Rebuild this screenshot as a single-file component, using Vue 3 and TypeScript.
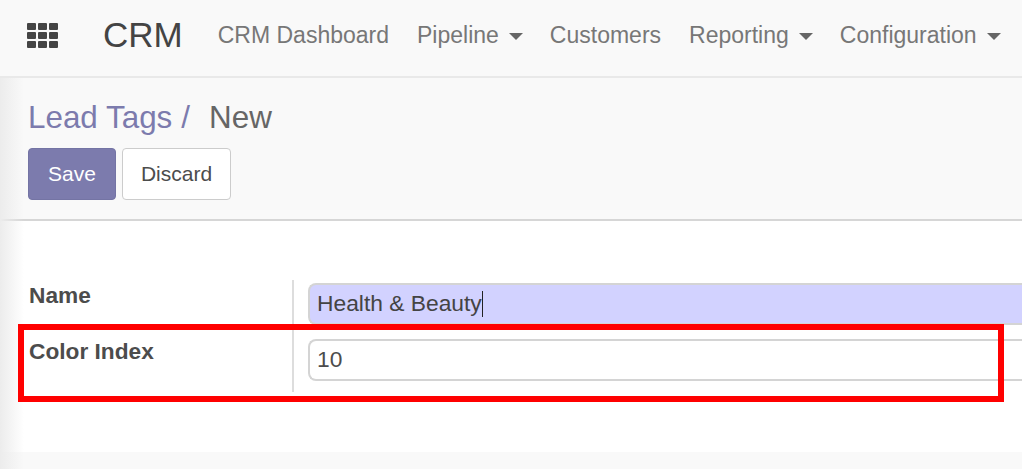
<script setup lang="ts">
const menus: { label: string; caret: boolean }[] = [
  { label: 'CRM Dashboard', caret: false },
  { label: 'Pipeline', caret: true },
  { label: 'Customers', caret: false },
  { label: 'Reporting', caret: true },
  { label: 'Configuration', caret: true },
]
const dots: number[] = [0, 1, 2, 3, 4, 5, 6, 7, 8]
</script>

<template>
  <div class="page">
    <header class="nav">
      <span class="apps"><i v-for="d in dots" :key="d"></i></span>
      <span class="brand">CRM</span>
      <nav class="menu">
        <span v-for="m in menus" :key="m.label" class="item">{{ m.label }}<b v-if="m.caret" class="caret"></b></span>
      </nav>
    </header>
    <section class="panel">
      <div class="crumbs"><span class="link">Lead Tags</span><span class="sep">/</span><span class="cur">New</span></div>
      <div class="buttons">
        <button class="btn save">Save</button>
        <button class="btn discard">Discard</button>
      </div>
    </section>
    <main class="sheet">
      <div class="form">
        <div class="labels">
          <div class="lab first">Name</div>
          <div class="lab">Color Index</div>
        </div>
        <div class="fields">
          <div class="field focus"><span class="val">Health &amp; Beauty</span><span class="cursor"></span></div>
          <div class="field"><span class="val">10</span></div>
        </div>
      </div>
    </main>
    <footer class="foot"></footer>
    <div class="shade"></div>
    <div class="mark"></div>
  </div>
</template>

<style>
html, body { margin: 0; background: #f9f9f9; overflow: hidden; }
</style>

<style scoped>
.page { position: relative; width: 1022px; height: 469px; overflow: hidden; background: #f9f9f9; font-family: "Liberation Sans", Arial, sans-serif; color: #4c4c4c; display: flex; flex-direction: column; }
.nav { height: 76px; flex: none; display: flex; align-items: center; border-bottom: 2px solid #e9e9e9; padding-left: 27px; box-sizing: content-box; }
.apps { width: 31px; height: 25px; display: grid; grid-template-columns: repeat(3, 9px); grid-template-rows: repeat(3, 7px); gap: 2px; margin-top: -5px; }
.apps i { background: #444; border-radius: 1px; }
.brand { font-size: 35px; color: #444; margin-left: 45px; margin-top: -7px; }
.menu { display: flex; margin-left: 35px; margin-top: -6px; font-size: 23px; color: #777; gap: 28px; white-space: nowrap; }
.caret { display: inline-block; width: 0; height: 0; border-left: 7px solid transparent; border-right: 7px solid transparent; border-top: 7px solid #666; margin-left: 10px; margin-right: -1px; vertical-align: 3px; }
.panel { height: 143px; flex: none; box-sizing: border-box; border-bottom: 2px solid #d6d6d6; padding: 22px 0 0 28px; }
.crumbs { font-size: 31.4px; line-height: 36px; display: flex; }
.link { color: #7c7bad; }
.sep { color: #7c7bad; margin-left: 9px; }
.cur { color: #666; margin-left: 19px; }
.buttons { display: flex; gap: 6px; margin-top: 12px; }
.btn { height: 52px; box-sizing: border-box; border-radius: 4px; font: 21px "Liberation Sans", Arial, sans-serif; padding: 0; }
.save { width: 88px; background: #7c7bad; border: 1px solid #7474a4; color: #fff; }
.discard { width: 109px; background: #fff; border: 1.5px solid #ccc; color: #4c4c4c; }
.sheet { height: 231px; flex: none; background: #fff; box-sizing: border-box; padding-top: 59px; }
.form { display: flex; margin-left: 29px; }
.labels { width: 263px; flex: none; height: 112px; border-right: 2px solid #ddd; font-weight: 700; font-size: 22.7px; color: #4c4c4c; }
.lab { height: 56px; line-height: 31px; }
.fields { flex: 1; padding: 3px 0 0 14px; display: flex; flex-direction: column; gap: 14px; }
.field { height: 42px; box-sizing: border-box; width: 760px; border: 2px solid #d4d4d4; border-right: 0; border-radius: 8px 0 0 8px; padding-left: 7px; font-size: 22.8px; line-height: 38px; color: #4c4c4c; display: flex; align-items: center; }
.val { margin-top: -2px; }
.focus { background: #d2d2ff; color: #444; }
.cursor { width: 1.5px; height: 26px; background: #222; }
.foot { flex: 1; background: #f9f9f9; }
.shade { position: absolute; left: 0; top: 78px; bottom: 0; width: 24px; background: linear-gradient(to right, #ececec, rgba(255, 255, 255, 0)); pointer-events: none; }
.mark { position: absolute; left: 18px; top: 324px; width: 986px; height: 78px; box-sizing: border-box; border: 6px solid #ff0000; pointer-events: none; }
</style>
